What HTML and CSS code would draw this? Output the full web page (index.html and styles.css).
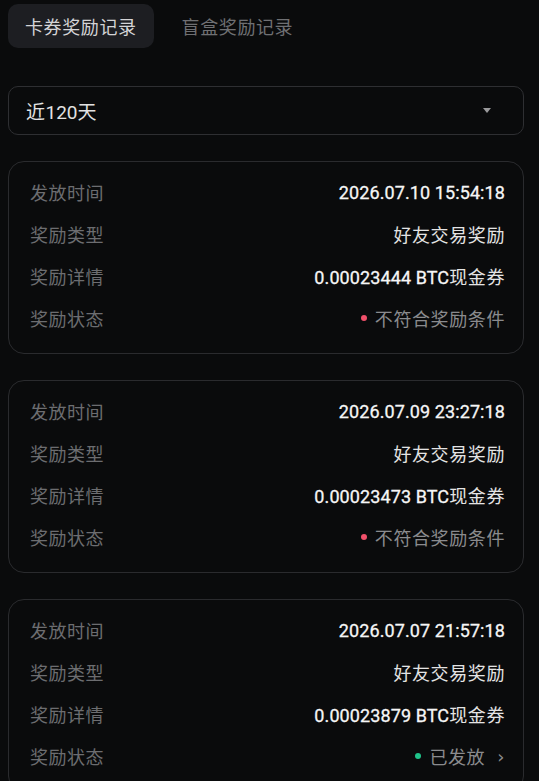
FILE: index.html
```html
<!DOCTYPE html>
<html lang="zh-CN">
<head>
    <meta charset="UTF-8">
    <meta name="viewport" content="width=device-width, initial-scale=1.0">
    <title>奖励记录</title>
    <link rel="stylesheet" href="styles.css">
</head>
<body>
<div class="page">
    <div class="tabs">
        <div class="tab active">卡券奖励记录</div>
        <div class="tab">盲盒奖励记录</div>
    </div>

    <div class="select">
        <span>近<span class="num">120</span>天</span>
        <span class="caret"></span>
    </div>

    <div class="card">
        <div class="row"><span class="label">发放时间</span><span class="value num">2026.07.10 15:54:18</span></div>
        <div class="row"><span class="label">奖励类型</span><span class="value">好友交易奖励</span></div>
        <div class="row"><span class="label">奖励详情</span><span class="value"><span class="num">0.00023444 BTC</span>现金券</span></div>
        <div class="row"><span class="label">奖励状态</span><span class="status"><i class="dot red"></i>不符合奖励条件</span></div>
    </div>

    <div class="card">
        <div class="row"><span class="label">发放时间</span><span class="value num">2026.07.09 23:27:18</span></div>
        <div class="row"><span class="label">奖励类型</span><span class="value">好友交易奖励</span></div>
        <div class="row"><span class="label">奖励详情</span><span class="value"><span class="num">0.00023473 BTC</span>现金券</span></div>
        <div class="row"><span class="label">奖励状态</span><span class="status"><i class="dot red"></i>不符合奖励条件</span></div>
    </div>

    <div class="card">
        <div class="row"><span class="label">发放时间</span><span class="value num">2026.07.07 21:57:18</span></div>
        <div class="row"><span class="label">奖励类型</span><span class="value">好友交易奖励</span></div>
        <div class="row"><span class="label">奖励详情</span><span class="value"><span class="num">0.00023879 BTC</span>现金券</span></div>
        <div class="row"><span class="label">奖励状态</span><span class="status"><i class="dot green"></i>已发放<span class="chev">›</span></span></div>
    </div>
</div>
</body>
</html>
```

FILE: styles.css
```css
html, body {
    background: #0a0b0c;
}
body {
    margin: 0;
    font-family: "Noto Sans CJK SC", "Noto Sans", sans-serif;
    color: #e6e6e6;
}
.page {
    padding: 4px 15px 0 8px;
}
.tabs {
    display: flex;
    gap: 11px;
}
.tab {
    height: 44px;
    padding: 0 17px;
    display: flex;
    align-items: center;
    font-size: 18px;
    letter-spacing: 0.6px;
    color: #6f7073;
    border-radius: 10px;
}
.tab.active {
    background: #1d1e22;
    color: #d4d4d6;
}
.num {
    font-family: Roboto, "Noto Sans", sans-serif;
    letter-spacing: 0;
}
.select {
    margin-top: 38px;
    height: 47px;
    border: 1px solid #2e2f32;
    border-radius: 10px;
    display: flex;
    align-items: center;
    justify-content: space-between;
    padding: 0 32px 0 17px;
    font-size: 19px;
    letter-spacing: 0.5px;
    color: #e2e2e2;
}
.caret {
    width: 0;
    height: 0;
    border-left: 4px solid transparent;
    border-right: 4px solid transparent;
    border-top: 5px solid #9a9a9c;
}
.card {
    margin-top: 26px;
    border: 1px solid #2a2b2e;
    border-radius: 16px;
    padding: 9px 18px 14px 21px;
}
.row {
    height: 42px;
    display: flex;
    align-items: center;
    justify-content: space-between;
}
.label {
    font-size: 18px;
    letter-spacing: 0.5px;
    color: #6c6d70;
}
.value {
    font-size: 18px;
    letter-spacing: 0.6px;
    color: #e4e4e4;
}
.value.num, .value .num {
    font-size: 18px;
    font-weight: 400;
    letter-spacing: 0.1px;
    color: #f6f6f6;
    -webkit-text-stroke: 0.3px #f6f6f6;
}
.status {
    display: flex;
    align-items: center;
    font-size: 18px;
    letter-spacing: 0.6px;
    color: #8a8b8e;
}
.dot {
    width: 6px;
    height: 6px;
    border-radius: 50%;
    margin-right: 8px;
}
.dot.red {
    background: #f0506a;
}
.dot.green {
    background: #1fc48a;
}
.chev {
    margin-left: 12px;
    font-size: 18px;
    color: #8a8b8e;
    font-family: "DejaVu Sans", sans-serif;
}
```
